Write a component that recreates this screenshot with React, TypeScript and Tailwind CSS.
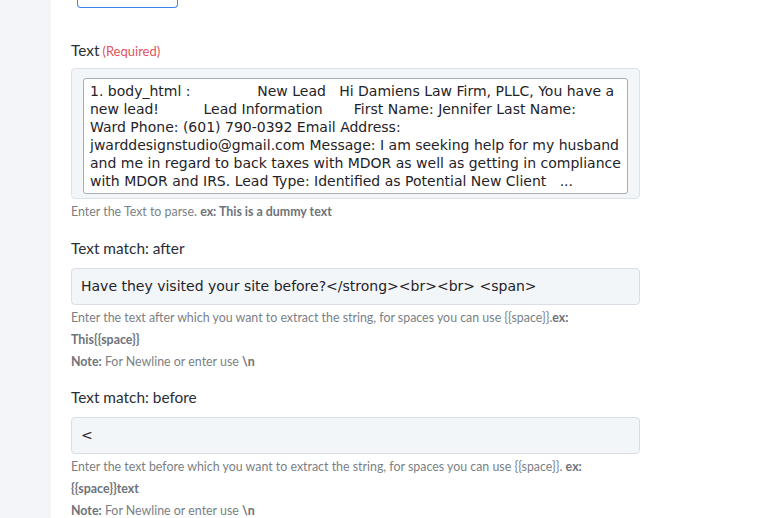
import React from "react";

const bodyLines = [
  "1. body_html :               New Lead   Hi Damiens Law Firm, PLLC, You have a",
  "new lead!          Lead Information       First Name: Jennifer Last Name:",
  "Ward Phone: (601) 790-0392 Email Address:",
  "jwarddesignstudio@gmail.com Message: I am seeking help for my husband",
  "and me in regard to back taxes with MDOR as well as getting in compliance",
  "with MDOR and IRS. Lead Type: Identified as Potential New Client   ...",
];

const Hint: React.FC<{ children: React.ReactNode }> = ({ children }) => (
  <p className="text-[12.4px] leading-[22px] text-[#7a7f86]">{children}</p>
);

const App: React.FC = () => {
  return (
    <div className="flex w-[781px] h-[518px] overflow-hidden bg-white font-['Lato',sans-serif]">
      {/* Left rail */}
      <div className="w-[50px] shrink-0 bg-[#f3f5f8] border-r border-[#eceff3] shadow-[1px_0_2px_rgba(0,0,0,0.04)]" />

      {/* Form */}
      <div className="flex-1 pl-[21px]">
        <div className="ml-[6px] w-[101px] h-[9px] -mt-[1px] border border-t-0 border-[#3a86e8] rounded-b-[4px]" />

        {/* Text */}
        <div className="mt-[31px] flex items-baseline gap-[3px]">
          <span className="text-[15.4px] text-[#2a2f36]">Text</span>
          <span className="text-[13px] text-[#e05260]">(Required)</span>
        </div>
        <div className="mt-[6px] w-[569px] h-[131px] bg-[#f3f6f9] border border-[#dde2e8] rounded-[4px] pt-[9px] px-[11px]">
          <div className="h-[116px] bg-white border border-[#a9adb2] rounded-[3px] pl-[6px] pr-[4px] pt-[3px] overflow-hidden">
            {bodyLines.map((line) => (
              <p
                key={line}
                className="whitespace-pre font-['DejaVu_Sans',sans-serif] text-[14px] leading-[18px] text-[#1f2328]"
              >
                {line}
              </p>
            ))}
          </div>
        </div>
        <div className="mt-[2px]">
          <Hint>
            Enter the Text to parse. <b className="font-bold text-[#6e737a]">ex: This is a dummy text</b>
          </Hint>
        </div>

        {/* Text match: after */}
        <div className="mt-[15px] text-[15.4px] text-[#2a2f36] leading-[20px]">Text match: after</div>
        <div className="mt-[10px] w-[569px] h-[37px] bg-[#f3f6f9] border border-[#d9dee4] rounded-[4px] flex items-center px-[9px]">
          <span className="font-['DejaVu_Sans',sans-serif] text-[14px] text-[#1f2328]">
            Have they visited your site before?&lt;/strong&gt;&lt;br&gt;&lt;br&gt; &lt;span&gt;
          </span>
        </div>
        <div className="mt-[2px]">
          <Hint>
            Enter the text after which you want to extract the string, for spaces you can use {"{{space}}"}.
            <b className="font-bold text-[#6e737a]">ex:</b>
          </Hint>
          <Hint>
            <b className="font-bold text-[#6e737a]">This{"{{space}}"}</b>
          </Hint>
          <Hint>
            <b className="font-bold text-[#6e737a]">Note:</b> For Newline or enter use <b className="font-bold text-[#6e737a]">\n</b>
          </Hint>
        </div>

        {/* Text match: before */}
        <div className="mt-[14px] text-[15.4px] text-[#2a2f36] leading-[20px]">Text match: before</div>
        <div className="mt-[10px] w-[569px] h-[37px] bg-[#f3f6f9] border border-[#d9dee4] rounded-[4px] flex items-center px-[9px]">
          <span className="font-['DejaVu_Sans',sans-serif] text-[14px] text-[#1f2328]">&lt;</span>
        </div>
        <div className="mt-[2px]">
          <Hint>
            Enter the text before which you want to extract the string, for spaces you can use {"{{space}}"}.{" "}
            <b className="font-bold text-[#6e737a]">ex:</b>
          </Hint>
          <Hint>
            <b className="font-bold text-[#6e737a]">{"{{space}}"}text</b>
          </Hint>
          <Hint>
            <b className="font-bold text-[#6e737a]">Note:</b> For Newline or enter use <b className="font-bold text-[#6e737a]">\n</b>
          </Hint>
        </div>
      </div>
    </div>
  );
};

export default App;
